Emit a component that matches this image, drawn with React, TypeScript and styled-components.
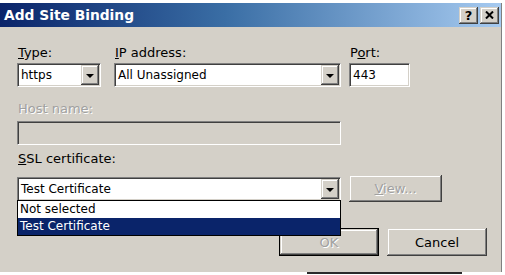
import React from "react";
import styled, { createGlobalStyle, css } from "styled-components";

const Global = createGlobalStyle`
  html, body { margin: 0; padding: 0; background: #fff; }
  body { font-family: "DejaVu Sans", Tahoma, sans-serif; font-size: 12px; color: #000; }
  * { box-sizing: border-box; }
`;

const raised = css`
  background: #d4d0c8;
  box-shadow: inset -1px -1px #404040, inset 1px 1px #d4d0c8,
    inset -2px -2px #808080, inset 2px 2px #fff;
`;

const sunken = css`
  border: 1px solid;
  border-color: #808080 #fff #fff #808080;
  box-shadow: inset 1px 1px #404040, inset -1px -1px #d4d0c8;
  padding: 1px;
`;

const disabledText = css`
  color: #a0a0a0;
  text-shadow: 1px 1px 0 #fff;
`;

const Page = styled.div`
  width: 505px;
  height: 275px;
  overflow: hidden;
  background: #fff;
  display: flex;
  flex-direction: column;
`;

const Window = styled.div`
  margin-top: 3px;
  width: 502px;
  height: 269px;
  background: #d4d0c8;
  border-right: 1px solid #808080;
  display: flex;
  flex-direction: column;
`;

const TitleBar = styled.div`
  height: 24px;
  flex: none;
  display: flex;
  align-items: center;
  justify-content: space-between;
  padding: 0 2px 0 4px;
  background: linear-gradient(to right, #0a246a 0%, #3a6ea5 45%, #a6caf0 100%);
`;

const Title = styled.span`
  color: #fff;
  font-weight: bold;
  font-size: 13.8px;
`;

const CaptionButtons = styled.div`
  display: flex;
  gap: 2px;
`;

const CaptionButton = styled.div`
  ${raised};
  width: 19px;
  height: 17px;
  display: flex;
  align-items: center;
  justify-content: center;
  font-weight: bold;
  font-size: 13px;
  line-height: 1;
  color: #000;
`;

const Content = styled.div`
  flex: 1;
  display: flex;
  flex-direction: column;
  padding: 0 14px 0 17px;
`;

const Row = styled.div<{ $mt: number }>`
  display: flex;
  align-items: flex-start;
  margin-top: ${(p) => p.$mt}px;
`;

const Field = styled.div<{ $ml?: number }>`
  display: flex;
  flex-direction: column;
  margin-left: ${(p) => p.$ml ?? 0}px;
`;

const Label = styled.label<{ $gap: number; $disabled?: boolean }>`
  display: block;
  font-size: 13px;
  line-height: 15px;
  height: 15px;
  margin-bottom: ${(p) => p.$gap}px;
  padding-left: 1px;
  white-space: nowrap;
  ${(p) => p.$disabled && disabledText};
`;

const Combo = styled.div<{ $w: number; $mt?: number }>`
  ${sunken};
  position: relative;
  width: ${(p) => p.$w}px;
  height: 24px;
  margin-top: ${(p) => p.$mt ?? 0}px;
  background: #fff;
  display: flex;
  align-items: stretch;
`;

const ComboText = styled.div`
  flex: 1;
  display: flex;
  align-items: center;
  padding-left: 2px;
  white-space: nowrap;
  overflow: hidden;
`;

const DropButton = styled.div`
  ${raised};
  width: 18px;
  flex: none;
  display: flex;
  align-items: center;
  justify-content: center;
`;

const Arrow = styled.span`
  width: 0;
  height: 0;
  border-left: 4px solid transparent;
  border-right: 4px solid transparent;
  border-top: 4px solid #000;
  margin-top: 1px;
`;

const TextBox = styled.div<{ $w: number; $disabled?: boolean }>`
  ${sunken};
  width: ${(p) => p.$w}px;
  height: 24px;
  background: ${(p) => (p.$disabled ? "#d4d0c8" : "#fff")};
  display: flex;
  align-items: center;
  padding-left: 3px;
`;

const DropList = styled.div`
  position: absolute;
  left: -1px;
  top: 100%;
  width: 324px;
  background: #fff;
  border: 1px solid #000;
  z-index: 5;
`;

const ListItem = styled.div<{ $selected?: boolean }>`
  height: 17px;
  line-height: 17px;
  padding-left: 2px;
  white-space: nowrap;
  background: ${(p) => (p.$selected ? "#0a246a" : "#fff")};
  color: ${(p) => (p.$selected ? "#fff" : "#000")};
`;

const Button = styled.div<{ $w: number; $h: number; $ml?: number; $default?: boolean; $disabled?: boolean }>`
  ${raised};
  width: ${(p) => p.$w}px;
  height: ${(p) => p.$h}px;
  margin-left: ${(p) => p.$ml ?? 0}px;
  font-size: 13px;
  display: flex;
  align-items: center;
  justify-content: center;
  ${(p) => p.$disabled && disabledText};
  ${(p) =>
    p.$default &&
    css`
      box-shadow: inset 0 0 0 1px #000, inset -2px -2px #404040,
        inset 2px 2px #d4d0c8, inset -3px -3px #808080, inset 3px 3px #fff;
    `};
`;

const ButtonRow = styled.div`
  display: flex;
  justify-content: flex-end;
  gap: 8px;
  margin-top: 26px;
`;

const BottomStrip = styled.div`
  height: 3px;
  display: flex;
`;

const BehindBar = styled.div`
  margin-left: 307px;
  width: 155px;
  height: 2px;
  background: #2a2a2a;
`;

const CloseIcon = () => (
  <svg width="9" height="8" viewBox="0 0 9 8">
    <path d="M1 0.5 L8 7.5 M8 0.5 L1 7.5" stroke="#000" strokeWidth="2" />
  </svg>
);

export default function App() {
  return (
    <>
      <Global />
      <Page>
        <Window>
          <TitleBar>
            <Title>Add Site Binding</Title>
            <CaptionButtons>
              <CaptionButton>?</CaptionButton>
              <CaptionButton>
                <CloseIcon />
              </CaptionButton>
            </CaptionButtons>
          </TitleBar>
          <Content>
            <Row $mt={18}>
              <Field>
                <Label $gap={3}>
                  <u>T</u>ype:
                </Label>
                <Combo $w={84}>
                  <ComboText>https</ComboText>
                  <DropButton>
                    <Arrow />
                  </DropButton>
                </Combo>
              </Field>
              <Field $ml={13}>
                <Label $gap={3}>
                  <u>I</u>P address:
                </Label>
                <Combo $w={227}>
                  <ComboText>All Unassigned</ComboText>
                  <DropButton>
                    <Arrow />
                  </DropButton>
                </Combo>
              </Field>
              <Field $ml={8}>
                <Label $gap={3}>
                  P<u>o</u>rt:
                </Label>
                <TextBox $w={61}>443</TextBox>
              </Field>
            </Row>
            <Row $mt={14}>
              <Field>
                <Label $gap={5} $disabled>
                  Host name:
                </Label>
                <TextBox $w={324} $disabled />
              </Field>
            </Row>
            <Row $mt={6}>
              <Field>
                <Label $gap={9}>
                  <u>S</u>SL certificate:
                </Label>
                <Row $mt={0}>
                  <Combo $w={324} $mt={2}>
                    <ComboText>Test Certificate</ComboText>
                    <DropButton>
                      <Arrow />
                    </DropButton>
                    <DropList>
                      <ListItem>Not selected</ListItem>
                      <ListItem $selected>Test Certificate</ListItem>
                    </DropList>
                  </Combo>
                  <Button $w={93} $h={27} $ml={8} $disabled>
                    <span>
                      <u>V</u>iew...
                    </span>
                  </Button>
                </Row>
              </Field>
            </Row>
            <ButtonRow>
              <Button $w={100} $h={28} $default $disabled>
                OK
              </Button>
              <Button $w={100} $h={28}>
                Cancel
              </Button>
            </ButtonRow>
          </Content>
        </Window>
        <BottomStrip>
          <BehindBar />
        </BottomStrip>
      </Page>
    </>
  );
}
